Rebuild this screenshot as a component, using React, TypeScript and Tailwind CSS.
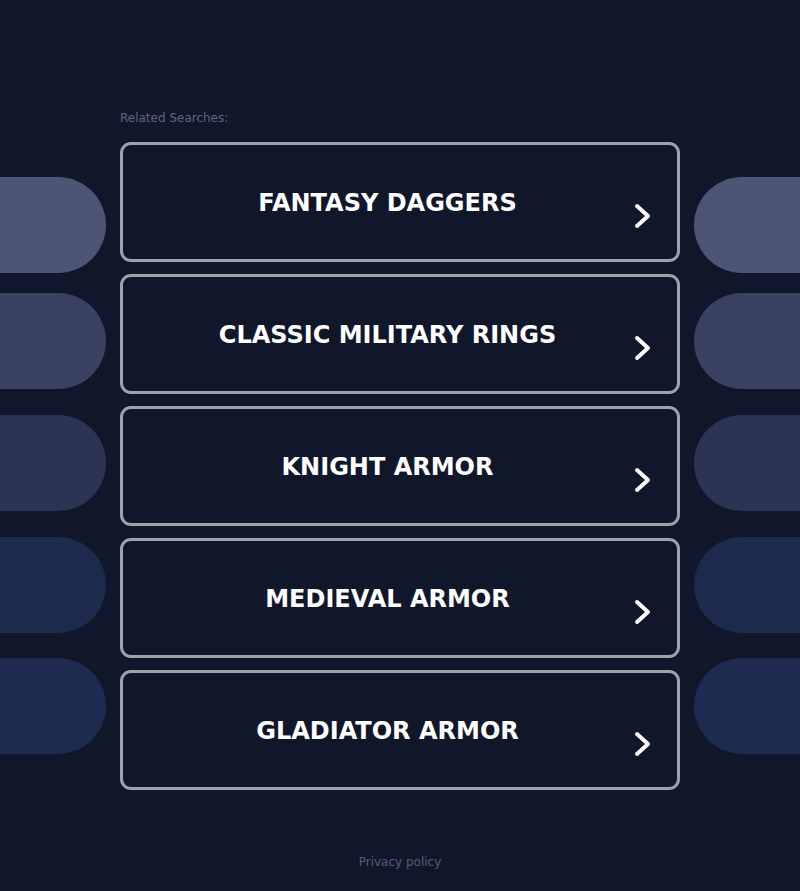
import React from "react";

const items = [
  "FANTASY DAGGERS",
  "CLASSIC MILITARY RINGS",
  "KNIGHT ARMOR",
  "MEDIEVAL ARMOR",
  "GLADIATOR ARMOR",
];

const pills = [
  { color: "bg-[#4c5573]", mt: "mt-[177px]" },
  { color: "bg-[#3a4262]", mt: "mt-[20px]" },
  { color: "bg-[#2c3454]", mt: "mt-[26px]" },
  { color: "bg-[#1e2a4d]", mt: "mt-[26px]" },
  { color: "bg-[#1e2a4f]", mt: "mt-[25px]" },
];

function Chevron() {
  return (
    <svg width="20" height="26" viewBox="0 0 20 26" fill="none">
      <path
        d="M4 3 L15 13 L4 23"
        stroke="white"
        strokeWidth="4"
        strokeLinecap="round"
        strokeLinejoin="round"
      />
    </svg>
  );
}

export default function App() {
  return (
    <div
      className="min-h-screen w-full bg-[#11172b] overflow-hidden"
      style={{ fontFamily: "'DejaVu Sans', sans-serif" }}
    >
      <div className="flex w-[800px] h-[891px]">
        <div className="w-[120px] flex flex-col">
          {pills.map((p, i) => (
            <div
              key={i}
              className={`${p.mt} ${p.color} w-[106px] h-[96px] rounded-r-[48px]`}
            />
          ))}
        </div>
        <div className="w-[560px] flex flex-col">
          <div className="pt-[111px] h-[142px] text-[12px] leading-[14px] text-[#5d6480]">
            Related Searches:
          </div>
          <div className="flex flex-col gap-[12px]">
            {items.map((t) => (
              <div
                key={t}
                className="relative h-[120px] border-[3px] border-[#a0a1a8] rounded-[11px] flex items-center justify-center pr-[25px] pt-[2px]"
              >
                <span className="text-white font-bold text-[24px] tracking-[0px]">
                  {t}
                </span>
                <div className="absolute right-[24px] top-[58px]">
                  <Chevron />
                </div>
              </div>
            ))}
          </div>
          <div className="mt-[65px] text-center text-[12px] leading-[14px] text-[#565d78]">
            Privacy policy
          </div>
        </div>
        <div className="w-[120px] flex flex-col items-end">
          {pills.map((p, i) => (
            <div
              key={i}
              className={`${p.mt} ${p.color} w-[106px] h-[96px] rounded-l-[48px]`}
            />
          ))}
        </div>
      </div>
    </div>
  );
}
